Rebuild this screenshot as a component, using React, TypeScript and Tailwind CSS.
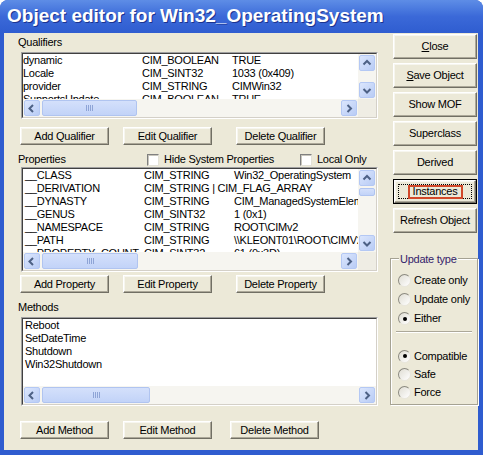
import React from 'react';

type Row = string[];

const qualifiers: Row[] = [
    ['dynamic', 'CIM_BOOLEAN', 'TRUE'],
    ['Locale', 'CIM_SINT32', '1033 (0x409)'],
    ['provider', 'CIM_STRING', 'CIMWin32'],
    ['SupportsUpdate', 'CIM_BOOLEAN', 'TRUE'],
];

const properties: Row[] = [
    ['__CLASS', 'CIM_STRING', 'Win32_OperatingSystem'],
    ['__DERIVATION', 'CIM_STRING | CIM_FLAG_ARRAY', ''],
    ['__DYNASTY', 'CIM_STRING', 'CIM_ManagedSystemElement'],
    ['__GENUS', 'CIM_SINT32', '1 (0x1)'],
    ['__NAMESPACE', 'CIM_STRING', 'ROOT\\CIMv2'],
    ['__PATH', 'CIM_STRING', '\\\\KLEONT01\\ROOT\\CIMV2:Win32_OperatingSystem'],
    ['__PROPERTY_COUNT', 'CIM_SINT32', '61 (0x3D)'],
];

const methods = ['Reboot', 'SetDateTime', 'Shutdown', 'Win32Shutdown'];

function Arrow({ dir }: { dir: 'up' | 'down' | 'left' | 'right' }) {
    const d = {
        up: 'M2.5 6.5 L6 3 L9.5 6.5',
        down: 'M2.5 4 L6 7.5 L9.5 4',
        left: 'M7 2 L3.5 5.5 L7 9',
        right: 'M4.5 2 L8 5.5 L4.5 9',
    }[dir];
    return (
        <div className="flex h-[18px] w-[18px] shrink-0 p-px">
            <div className="flex flex-1 items-center justify-center rounded-[2px] border border-[#b4c8f4] bg-gradient-to-br from-[#dbe6fd] to-[#b9ccf5]">
                <svg width="12" height="11" viewBox="0 0 12 11">
                    <path d={d} fill="none" stroke="#4d6185" strokeWidth="2" />
                </svg>
            </div>
        </div>
    );
}

function Thumb({ className, vertical }: { className: string; vertical?: boolean }) {
    return (
        <div className={`flex shrink-0 p-px ${className}`}>
            <div className="flex flex-1 items-center justify-center rounded-[2px] border border-[#b0c4f0] bg-gradient-to-b from-[#d4e0fb] to-[#c2d3f8]">
                {!vertical && (
                    <div className="flex gap-px">
                        <div className="h-[6px] w-px bg-[#8ea4d6]" />
                        <div className="h-[6px] w-px bg-[#8ea4d6]" />
                        <div className="h-[6px] w-px bg-[#8ea4d6]" />
                        <div className="h-[6px] w-px bg-[#8ea4d6]" />
                    </div>
                )}
            </div>
        </div>
    );
}

function ListBox({
    className,
    rows,
    vscroll,
    vthumb,
    hthumb,
    padLeft,
}: {
    className: string;
    rows: Row[];
    vscroll?: boolean;
    vthumb?: boolean;
    hthumb: string;
    padLeft: string;
}) {
    return (
        <div className={`ml-px w-[357px] border border-t-[#a0a0a0] border-l-[#a0a0a0] border-b-white border-r-white ${className}`}>
            <div className="flex h-full flex-col border border-t-[#404040] border-l-[#404040] border-b-[#d4d0c8] border-r-[#d4d0c8] bg-white">
                <div className="flex min-h-0 flex-1">
                    <div className={`min-w-0 flex-1 overflow-hidden ${padLeft}`}>
                        {rows.map((r, i) => (
                            <div key={i} className="flex h-[13px] whitespace-nowrap leading-[13px]">
                                <span className="w-[119px] shrink-0">{r[0]}</span>
                                <span className="w-[90px] shrink-0">{r[1]}</span>
                                <span className="shrink-0">{r[2]}</span>
                            </div>
                        ))}
                    </div>
                    {vscroll && (
                        <div className="flex w-[18px] flex-col bg-[#f6f5f0]">
                            <Arrow dir="up" />
                            {vthumb && <Thumb className="h-[10px]" vertical />}
                            <div className="flex-1" />
                            <Arrow dir="down" />
                        </div>
                    )}
                </div>
                <div className="flex h-[18px]">
                    <div className="flex flex-1 bg-[#f6f5f0]">
                        <Arrow dir="left" />
                        <Thumb className={hthumb} />
                        <div className="flex-1" />
                        <Arrow dir="right" />
                    </div>
                    {vscroll && <div className="w-[18px] bg-[#efede4]" />}
                </div>
            </div>
        </div>
    );
}

function Btn({ children, className = '' }: { children: React.ReactNode; className?: string }) {
    return (
        <button className={`flex shrink-0 items-center justify-center border border-t-white border-l-white border-b-[#716f64] border-r-[#716f64] bg-[#ece9d8] text-black shadow-[inset_-1px_-1px_0_#aca899,inset_1px_1px_0_#f7f6ef] ${className}`}>
            {children}
        </button>
    );
}

function Check({ label }: { label: string }) {
    return (
        <div className="flex items-center">
            <span className="h-[12px] w-[12px] border border-t-[#808080] border-l-[#808080] border-b-[#e4e2d8] border-r-[#e4e2d8] bg-white shadow-[inset_1px_1px_0_#c8c6bc]" />
            <span className="ml-[5px] leading-[13px]">{label}</span>
        </div>
    );
}

function Radio({ label, checked, className }: { label: string; checked?: boolean; className: string }) {
    return (
        <div className={`flex items-center ${className}`}>
            <span className="flex h-[13px] w-[13px] items-center justify-center rounded-full border border-t-[#8a897f] border-l-[#8a897f] border-b-[#e8e6dc] border-r-[#e8e6dc] bg-gradient-to-br from-[#e0ded4] to-white">
                {checked && <span className="h-[4px] w-[4px] rounded-full bg-black" />}
            </span>
            <span className="ml-[3px] leading-[13px]">{label}</span>
        </div>
    );
}

export default function App() {
    return (
        <div className="h-[455px] w-[483px] overflow-hidden bg-white font-['Liberation_Sans',Arial,sans-serif] text-[11px] tracking-[-0.25px] text-black">
            <div className="flex h-full flex-col rounded-t-[8px] bg-[#2f5ccf]">
                {/* Title bar */}
                <div className="flex h-[33px] shrink-0 items-center rounded-t-[8px] bg-gradient-to-b from-[#5e8de6] via-[#3b69d8] to-[#2f5dd0] pl-[7px]">
                    <span className="text-[19px] font-bold tracking-normal text-white [text-shadow:1px_1px_0_#1b338f]">
                        Object editor for Win32_OperatingSystem
                    </span>
                </div>

                <div className="mb-[5px] ml-[4px] mr-[5px] flex flex-1 bg-[#ece9d8]">
                    {/* Left column */}
                    <div className="flex w-[374px] flex-col pl-[16px]">
                        <div className="-ml-[2px] mt-[3px] h-[13px] leading-[13px]">Qualifiers</div>
                        <ListBox className="mt-[3px] h-[67px]" rows={qualifiers} vscroll hthumb="w-[97px]" padLeft="pl-0" />
                        <div className="mt-[8px] flex">
                            <Btn className="h-[18px] w-[89px]">Add Qualifier</Btn>
                            <Btn className="ml-[14px] h-[18px] w-[89px]">Edit Qualifier</Btn>
                            <Btn className="ml-[24px] h-[18px] w-[89px]">Delete Qualifier</Btn>
                        </div>

                        <div className="mt-[8px] flex h-[13px] items-center">
                            <span className="-ml-[2px] w-[129px] leading-[13px]">Properties</span>
                            <div className="w-[153px]">
                                <Check label="Hide System Properties" />
                            </div>
                            <Check label="Local Only" />
                        </div>
                        <ListBox className="mt-px h-[105px]" rows={properties} vscroll vthumb hthumb="w-[98px]" padLeft="pl-[2px]" />
                        <div className="mt-[3px] flex">
                            <Btn className="h-[18px] w-[89px]">Add Property</Btn>
                            <Btn className="ml-[14px] h-[18px] w-[89px]">Edit Property</Btn>
                            <Btn className="ml-[24px] h-[18px] w-[89px]">Delete Property</Btn>
                        </div>

                        <div className="-ml-[2px] mt-[8px] h-[13px] leading-[13px]">Methods</div>
                        <ListBox
                            className="mt-[3px] h-[89px]"
                            rows={methods.map(m => [m, '', ''])}
                            hthumb="w-[110px]"
                            padLeft="pl-[2px]"
                        />
                        <div className="mt-[15px] flex">
                            <Btn className="h-[18px] w-[89px]">Add Method</Btn>
                            <Btn className="ml-[14px] h-[18px] w-[89px]">Edit Method</Btn>
                            <Btn className="ml-[18px] h-[18px] w-[89px]">Delete Method</Btn>
                        </div>
                    </div>

                    {/* Right column */}
                    <div className="ml-[12px] flex w-[88px] flex-col">
                        <div className="ml-[3px] mt-px flex w-[84px] flex-col gap-[4px]">
                            <Btn className="h-[25px] w-[84px]">
                                <span><span className="underline">C</span>lose</span>
                            </Btn>
                            <Btn className="h-[25px] w-[84px]">
                                <span><span className="underline">S</span>ave Object</span>
                            </Btn>
                            <Btn className="h-[25px] w-[84px]">Show MOF</Btn>
                            <Btn className="h-[25px] w-[84px]">Superclass</Btn>
                            <Btn className="h-[25px] w-[84px]">Derived</Btn>
                            <div className="h-[25px] w-[84px] border border-black">
                                <Btn className="relative h-full w-full">
                                    <span className="absolute inset-[3px] border border-dotted border-black" />
                                    <span className="relative flex h-[14px] w-[55px] items-center justify-center border-2 border-[#d2482a]">
                                        Instances
                                    </span>
                                </Btn>
                            </div>
                            <Btn className="h-[25px] w-[84px]">Refresh Object</Btn>
                        </div>

                        <div className="relative mt-[25px] flex h-[147px] flex-col border border-[#a5a293] pl-[7px] pt-[12px] shadow-[inset_1px_1px_0_#fff,1px_1px_0_#fff]">
                            <span className="absolute -top-[6px] left-[8px] bg-[#ece9d8] px-px leading-[13px] text-[#33226b]">
                                Update type
                            </span>
                            <Radio label="Create only" className="h-[19px]" />
                            <Radio label="Update only" className="h-[19px]" />
                            <Radio label="Either" checked className="h-[19px]" />
                            <div className="-ml-[2px] mr-[5px] mt-[3px] h-[2px] border-t border-b border-t-[#aca899] border-b-white" />
                            <div className="mt-[14px]" />
                            <Radio label="Compatible" checked className="h-[18px]" />
                            <Radio label="Safe" className="h-[18px]" />
                            <Radio label="Force" className="h-[18px]" />
                        </div>
                    </div>
                </div>
            </div>
        </div>
    );
}
